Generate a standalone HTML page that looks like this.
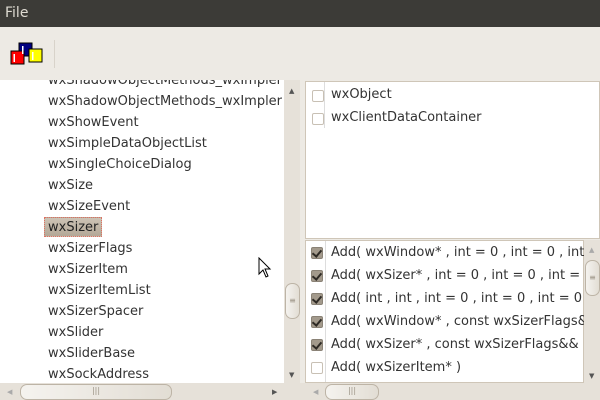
<html><head><style>
body{margin:0;width:600px;height:400px;overflow:hidden;background:#edeae4;font-family:"DejaVu Sans","Liberation Sans",sans-serif;font-size:13px;color:#333;position:relative}
.a{position:absolute}
.row{position:absolute;left:48px;white-space:nowrap;line-height:21px;height:21px}
.cb{position:absolute;width:10px;height:10px;border:1px solid #c8c0b4;border-radius:2px;background:#fff}
.cb.on{background:#a39a8c;border-color:#8a8276}
.cb.on:after{content:"";position:absolute;left:2px;top:0px;width:4px;height:7px;border:solid #2e2a25;border-width:0 2px 2px 0;transform:rotate(40deg)}
.rt{position:absolute;left:331px;white-space:nowrap;line-height:23px}
.thumb{position:absolute;background:linear-gradient(90deg,#f5f3ef,#e2ddd4);border:1px solid #bdb4a6;border-radius:7px;color:#9a9284;font-size:8px;text-align:center;line-height:12px}
.ar{position:absolute;font-size:7px;color:#555}
</style></head><body>
<div class="a" style="left:0;top:0;width:600px;height:27px;background:#3c3b37;color:#dfdbd2;font-size:14px;line-height:26px;padding-left:5px;box-sizing:border-box">File</div>
<svg class="a" style="left:10px;top:42px" width="34" height="24">
<rect x="9" y="1" width="13" height="13" fill="#000080" stroke="#000"/>
<rect x="1" y="9" width="13" height="13" fill="#f00" stroke="#000"/>
<rect x="19" y="7" width="13" height="13" fill="#ff0" stroke="#000"/>
<rect x="12" y="4" width="1.5" height="8" fill="#fff"/><rect x="3.5" y="12" width="1.5" height="8" fill="#fff"/><rect x="22" y="10" width="1.5" height="8" fill="#fff"/>
</svg>
<div class="a" style="left:54px;top:40px;width:1px;height:28px;background:#d8d3ca"></div>
<div class="a" style="left:0;top:80px;width:284px;height:303px;background:#fff;overflow:hidden">
<div class="row" style="top:-10px">wxShadowObjectMethods_wxImpler</div>
<div class="row" style="top:11px">wxShadowObjectMethods_wxImpler</div>
<div class="row" style="top:32px">wxShowEvent</div>
<div class="row" style="top:53px">wxSimpleDataObjectList</div>
<div class="row" style="top:74px">wxSingleChoiceDialog</div>
<div class="row" style="top:95px">wxSize</div>
<div class="row" style="top:116px">wxSizeEvent</div>
<div class="a" style="left:44px;top:137px;width:58px;height:20px;background:linear-gradient(#cdc3b5,#b3a897);border:1px dotted #e07060;box-sizing:border-box"></div>
<div class="row" style="top:137px;color:#222">wxSizer</div>
<div class="row" style="top:158px">wxSizerFlags</div>
<div class="row" style="top:179px">wxSizerItem</div>
<div class="row" style="top:200px">wxSizerItemList</div>
<div class="row" style="top:221px">wxSizerSpacer</div>
<div class="row" style="top:242px">wxSlider</div>
<div class="row" style="top:263px">wxSliderBase</div>
<div class="row" style="top:284px">wxSockAddress</div>
<svg class="a" style="left:258px;top:177px" width="14" height="22"><path d="M1 1 L1 17 L5 13 L8 20 L10 19 L7 12 L12 12 Z" fill="#fff" stroke="#000"/></svg>
</div>
<div class="a" style="left:284px;top:80px;width:16px;height:303px;background:#e6e1d9"></div>
<div class="ar" style="left:289px;top:87px">▲</div>
<div class="ar" style="left:289px;top:371px">▼</div>
<div class="thumb" style="left:285px;top:283px;width:13px;height:34px;line-height:34px">≡</div>
<div class="a" style="left:0;top:383px;width:600px;height:17px;background:#e6e1d9"></div>
<div class="ar" style="left:7px;top:388px;color:#aaa">◀</div>
<div class="ar" style="left:272px;top:388px">▶</div>
<div class="ar" style="left:313px;top:388px;color:#aaa">◀</div>
<div class="thumb" style="left:20px;top:384px;width:150px;height:14px">|||</div>
<div class="thumb" style="left:325px;top:384px;width:52px;height:14px">|||</div>
<div class="a" style="left:305px;top:81px;width:293px;height:156px;background:#fff;border:1px solid #cfc6b8"></div>
<div class="a" style="left:324px;top:82px;width:1px;height:46px;background:#ddd"></div>
<div class="cb" style="left:312px;top:90px"></div><div class="rt" style="top:83px">wxObject</div>
<div class="cb" style="left:312px;top:113px"></div><div class="rt" style="top:106px">wxClientDataContainer</div>
<div class="a" style="left:305px;top:240px;width:279px;height:143px;background:#fff;border:1px solid #cfc6b8;box-sizing:border-box;overflow:hidden">
<div class="a" style="left:19px;top:0;width:1px;height:143px;background:#ddd"></div>
</div>
<div class="a" style="left:584px;top:240px;width:16px;height:143px;background:#e6e1d9"></div>
<div class="thumb" style="left:585px;top:260px;width:13px;height:34px;line-height:34px">≡</div>
<div class="ar" style="left:589px;top:246px;color:#aaa">▲</div>
<div class="ar" style="left:589px;top:372px">▼</div>
<div class="a" style="left:305px;top:241px;width:279px;height:141px;overflow:hidden">
<div class="cb on" style="left:6px;top:6px"></div><div class="rt" style="left:26px;top:0">Add( wxWindow* , int = 0 , int = 0 , int</div>
<div class="cb on" style="left:6px;top:29px"></div><div class="rt" style="left:26px;top:23px">Add( wxSizer* , int = 0 , int = 0 , int = 0</div>
<div class="cb on" style="left:6px;top:52px"></div><div class="rt" style="left:26px;top:46px">Add( int , int , int = 0 , int = 0 , int = 0</div>
<div class="cb on" style="left:6px;top:75px"></div><div class="rt" style="left:26px;top:69px">Add( wxWindow* , const wxSizerFlags&amp;</div>
<div class="cb on" style="left:6px;top:98px"></div><div class="rt" style="left:26px;top:92px">Add( wxSizer* , const wxSizerFlags&amp;&amp;</div>
<div class="cb" style="left:6px;top:121px"></div><div class="rt" style="left:26px;top:115px">Add( wxSizerItem* )</div>
</div>
</body></html>
